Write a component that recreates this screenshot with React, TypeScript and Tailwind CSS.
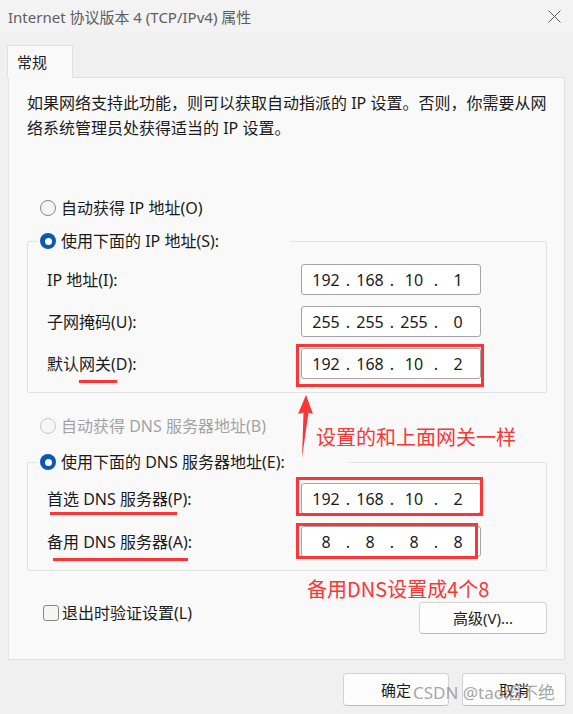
import { Fragment } from 'react'

const ipRows = [
  { label: 'IP 地址(I):', parts: ['192', '168', '10', '1'] },
  { label: '子网掩码(U):', parts: ['255', '255', '255', '0'] },
  { label: '默认网关(D):', parts: ['192', '168', '10', '2'], mark: 'left-[-6px] top-[-5px] w-[188px] h-[43px]', line: 'left-[51px] top-[32px] w-[38px]' },
]

const dnsRows = [
  { label: '首选 DNS 服务器(P):', parts: ['192', '168', '10', '2'], mark: 'left-[-6px] top-[-7px] w-[187px] h-[39px]', line: 'left-[22px] top-[29px] w-[127px]' },
  { label: '备用 DNS 服务器(A):', parts: ['8', '8', '8', '8'], mark: 'left-[-6px] top-[-4px] w-[182px] h-[36px]', line: 'left-[25px] top-[32px] w-[135px]' },
]

interface RowProps {
  label: string
  parts: string[]
  mark?: string
  line?: string
}

function Radio({ checked, disabled }: { checked?: boolean; disabled?: boolean }) {
  if (checked) {
    return (
      <span className="flex size-[16px] shrink-0 items-center justify-center rounded-full bg-[#0a5bb0]">
        <span className="size-[7px] rounded-full bg-white" />
      </span>
    )
  }
  return (
    <span
      className={
        disabled
          ? 'size-[16px] shrink-0 rounded-full border border-[#c6c6c6] bg-[#f7f7f7]'
          : 'size-[16px] shrink-0 rounded-full border border-[#878787] bg-[#f5f5f5]'
      }
    />
  )
}

function IpBox({ parts, mark }: { parts: string[]; mark?: string }) {
  return (
    <div className="relative flex h-[31px] w-[180px] items-center rounded-[3px] border border-[#a5a5a5] bg-white pl-[6px] text-[16px] text-[#1b1b1b]">
      {parts.map((p, i) => (
        <Fragment key={i}>
          {i > 0 && <span className="w-[8px] text-center">.</span>}
          <span className="w-[36px] text-center">{p}</span>
        </Fragment>
      ))}
      {mark && <div className={`absolute border-[3px] border-[#fa3636] ${mark}`} />}
    </div>
  )
}

function Row({ label, parts, mark, line }: RowProps) {
  return (
    <div className="relative flex h-[31px] items-center">
      <span className="w-[273px] pl-[19px]">{label}</span>
      <IpBox parts={parts} mark={mark} />
      {line && <div className={`absolute h-[3px] bg-[#fa3636] ${line}`} />}
    </div>
  )
}

function Group({ legend, legendWidth, rows, top }: { legend: string; legendWidth: string; rows: RowProps[]; top: string }) {
  return (
    <fieldset className={`rounded-[2px] border border-[#e1e1e1] pb-[13px] ${top}`}>
      <legend className={`ml-[9px] flex h-[24px] items-center gap-[5px] pl-[3px] ${legendWidth}`}>
        <Radio checked />
        <span>{legend}</span>
      </legend>
      <div className="flex flex-col gap-[11px]">
        {rows.map(r => (
          <Row key={r.label} {...r} />
        ))}
      </div>
    </fieldset>
  )
}

function Button({ children, className }: { children: string; className: string }) {
  return (
    <div
      className={`flex items-center justify-center rounded-[4px] border border-[#d3d3d3] border-b-[#bcbcbc] bg-[#fdfdfd] text-[15px] text-[#1b1b1b] ${className}`}
    >
      {children}
    </div>
  )
}

export default function App() {
  return (
    <div className="relative h-[714px] w-[573px] overflow-hidden bg-[#f0f0f0] text-[16px] leading-[24px] text-[#1b1b1b] [font-family:'Noto_Sans','Noto_Sans_CJK_SC',sans-serif]">
      <div className="flex h-[33px] items-center justify-between bg-[#f3f3f3] pl-[8px] pr-[11px]">
        <span className="text-[15px] text-[#5e5e5e]">Internet 协议版本 4 (TCP/IPv4) 属性</span>
        <svg width="13" height="13" viewBox="0 0 13 13" className="mr-[1px]">
          <path d="M0.5 0.5 L12.5 12.5 M12.5 0.5 L0.5 12.5" stroke="#5a5a5a" strokeWidth="1" fill="none" />
        </svg>
      </div>

      <div className="ml-[7px] mt-[12px] relative z-10 -mb-[1px] flex h-[33px] w-[66px] items-center border border-b-0 border-[#e1e1e1] bg-[#f9f9f9] pl-[9px] text-[15px]">
        常规
      </div>

      <div className="ml-[8px] flex h-[583px] w-[557px] flex-col border border-[#e1e1e1] bg-[#f9f9f9] pl-[18px] pr-[17px] pt-[13px]">
        <p className="leading-[25px]">
          如果网络支持此功能，则可以获取自动指派的 IP 设置。否则，你需要从网
          <br />
          络系统管理员处获得适当的 IP 设置。
        </p>

        <div className="mt-[55px] flex h-[24px] items-center gap-[5px] pl-[13px]">
          <Radio />
          <span>自动获得 IP 地址(O)</span>
        </div>

        <Group legend="使用下面的 IP 地址(S):" legendWidth="w-[253px]" rows={ipRows} top="mt-[9px] [&>div]:pt-[11px]" />

        <div className="mt-[21px] flex h-[24px] items-center gap-[5px] pl-[13px] text-[#a3a3a3]">
          <Radio disabled />
          <span>自动获得 DNS 服务器地址(B)</span>
        </div>

        <Group legend="使用下面的 DNS 服务器地址(E):" legendWidth="w-[312px]" rows={dnsRows} top="mt-[12px] [&>div]:pt-[9px] [&>div]:gap-[12px]" />

        <div className="mt-[31px] flex items-start justify-between">
          <div className="flex h-[21px] items-center gap-[3px] pl-[16px]">
            <span className="size-[16px] rounded-[3px] border border-[#878787] bg-[#f5f5f5]" />
            <span>退出时验证设置(L)</span>
          </div>
          <Button className="h-[32px] w-[128px]">高级(V)...</Button>
        </div>
      </div>

      <div className="mt-[13px] flex justify-end gap-[13px] pr-[7px]">
        <Button className="h-[33px] w-[106px]">确定</Button>
        <Button className="h-[33px] w-[104px]">取消</Button>
      </div>

      <svg className="absolute left-[296px] top-[393px]" width="20" height="68" viewBox="0 0 20 68">
        <path d="M10 2 L17 21 L12.5 19.5 L6 65 L7.5 19.5 L2 21 Z" fill="#fa3636" />
      </svg>

      <div className="absolute left-[316px] top-[424px] text-[20px] leading-[26px] text-[#fa3636] [font-family:'Noto_Sans_CJK_SC',sans-serif]">
        设置的和上面网关一样
      </div>
      <div className="absolute left-[307px] top-[576px] text-[20px] leading-[26px] text-[#fa3636] [font-family:'Noto_Sans_CJK_SC',sans-serif]">
        备用DNS设置成4个8
      </div>
      <div className="absolute left-[413px] top-[681px] text-[17px] leading-[24px] text-[#8f8f8f]/80">
        CSDN @tao滔不绝
      </div>
    </div>
  )
}
